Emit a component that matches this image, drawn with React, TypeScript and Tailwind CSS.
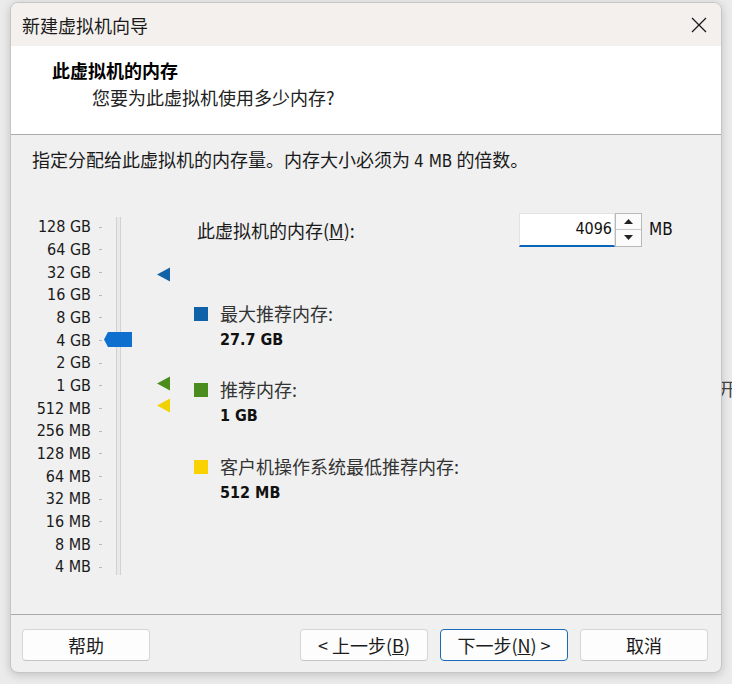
import React from "react";

const LATIN = '"DejaVu Sans Condensed", "Liberation Sans", "Noto Sans CJK SC", sans-serif';
const CJK = '"Noto Sans CJK SC", "Liberation Sans", sans-serif';

const SCALE = [
  "128 GB",
  "64 GB",
  "32 GB",
  "16 GB",
  "8 GB",
  "4 GB",
  "2 GB",
  "1 GB",
  "512 MB",
  "256 MB",
  "128 MB",
  "64 MB",
  "32 MB",
  "16 MB",
  "8 MB",
  "4 MB",
];

function Marker({ color, top }: { color: string; top: number }) {
  return (
    <svg
      className="absolute left-[125px]"
      style={{ top }}
      width="14"
      height="15"
      viewBox="0 0 14 15"
    >
      <polygon points="0,7.5 13,0.5 13,14.5" fill={color} />
    </svg>
  );
}

function MemorySlider() {
  return (
    <div className="relative mt-[4px] h-[363px] w-[140px]">
      <div className="flex flex-col">
        {SCALE.map((s) => (
          <div key={s} className="flex h-[22.67px] items-center">
            <span
              className="w-[59px] text-right text-[16px] leading-none text-[#1a1a1a]"
              style={{ fontFamily: LATIN }}
            >
              {s}
            </span>
            <span className="ml-[8px] h-px w-[3px] bg-[#b8b8b8]" />
          </div>
        ))}
      </div>
      {/* track */}
      <div className="absolute left-[84px] top-[1px] h-[358px] w-[5px] border-x border-[#d2d2d2] bg-[#e9e9e9]" />
      {/* thumb */}
      <svg className="absolute left-[72px] top-[116px]" width="28" height="15" viewBox="0 0 28 15">
        <polygon points="0,7.5 4,0 28,0 28,15 4,15" fill="#0f6fce" />
      </svg>
      <Marker color="#1262a8" top={51} />
      <Marker color="#4a8d1e" top={160} />
      <Marker color="#f2d100" top={182} />
    </div>
  );
}

function Legend({
  color,
  label,
  value,
  className = "",
}: {
  color: string;
  label: string;
  value: string;
  className?: string;
}) {
  return (
    <div className={"flex items-start " + className}>
      <span className="mt-[6px] h-[14px] w-[14px]" style={{ background: color }} />
      <div className="ml-[12px] flex flex-col">
        <span className="h-[24px] text-[18px] leading-[24px] text-[#333]" style={{ fontFamily: CJK }}>
          {label}
        </span>
        <span
          className="mt-[3px] h-[24px] text-[16px] font-bold leading-[24px] text-[#111]"
          style={{ fontFamily: LATIN }}
        >
          {value}
        </span>
      </div>
    </div>
  );
}

function Button({
  children,
  primary = false,
}: {
  children: React.ReactNode;
  primary?: boolean;
}) {
  return (
    <button
      type="button"
      className={[
        "flex h-[32px] w-[128px] items-center justify-center rounded-[4px] border bg-[#fdfdfd] text-[18px] leading-none text-[#1b1b1b]",
        primary ? "border-[#1a6bb8]" : "border-[#d6d6d6] border-b-[#c4c4c4]",
      ].join(" ")}
      style={{ fontFamily: CJK }}
    >
      {children}
    </button>
  );
}

export default function App() {
  return (
    <div className="relative h-[684px] w-[732px] overflow-hidden bg-[#ebebeb]">
      <span
        className="absolute left-[718px] top-[379px] text-[18px] leading-none text-[#444]"
        style={{ fontFamily: CJK }}
      >
        开
      </span>
      <div className="relative z-10 ml-[10px] mt-[2px] flex h-[671px] w-[712px] flex-col overflow-hidden rounded-[8px] border border-[#c6c6c6] bg-[#f0f0f0] shadow-[0_2px_10px_rgba(0,0,0,0.18)]">
        {/* title bar */}
        <div className="flex h-[43px] shrink-0 items-center justify-between bg-[#f4f0ee] pl-[11px] pr-[14px]">
          <span className="text-[18px] leading-none text-[#1a1a1a]" style={{ fontFamily: CJK }}>
            新建虚拟机向导
          </span>
          <svg width="16" height="16" viewBox="0 0 16 16">
            <path d="M1 1 L15 15 M15 1 L1 15" stroke="#1a1a1a" strokeWidth="1.3" />
          </svg>
        </div>

        {/* header */}
        <div className="flex h-[89px] shrink-0 flex-col border-b border-[#a9a9a9] bg-white pl-[41px] pt-[12px]">
          <span className="h-[24px] text-[18px] font-bold leading-[24px] text-black" style={{ fontFamily: CJK }}>
            此虚拟机的内存
          </span>
          <span
            className="ml-[40px] mt-[3px] h-[24px] text-[18px] leading-[24px] text-[#222]"
            style={{ fontFamily: CJK }}
          >
            您要为此虚拟机使用多少内存?
          </span>
        </div>

        {/* body */}
        <div className="flex flex-1 flex-col px-[21px] pt-[12px]">
          <span className="h-[24px] text-[18px] leading-[24px] text-[#1a1a1a]" style={{ fontFamily: CJK }}>
            指定分配给此虚拟机的内存量。内存大小必须为{" "}
            <span style={{ fontFamily: LATIN }} className="text-[17px]">
              4 MB
            </span>{" "}
            的倍数。
          </span>

          <div className="mt-[41px] flex items-start">
            <MemorySlider />

            <div className="ml-[22px] flex flex-1 flex-col">
              <div className="flex h-[35px] items-center">
                <span
                  className="ml-[3px] w-[322px] text-[18px] leading-none text-[#1a1a1a]"
                  style={{ fontFamily: CJK }}
                >
                  此虚拟机的内存(<span className="underline">M</span>):
                </span>
                <div className="flex h-[34px] w-[96px] items-center justify-end border border-b-2 border-[#e3e3e3] border-b-[#0a64b8] bg-white pr-[2px]">
                  <span className="text-[16px] leading-none text-[#111]" style={{ fontFamily: LATIN }}>
                    4096
                  </span>
                </div>
                <div className="flex h-[34px] w-[27px] flex-col border border-[#b9b9b9] bg-[#f3f3f3]">
                  <div className="flex flex-1 items-center justify-center border-b border-[#c9c9c9] bg-[#fbfbfb]">
                    <svg width="9" height="5" viewBox="0 0 9 5">
                      <polygon points="0,5 4.5,0 9,5" fill="#222" />
                    </svg>
                  </div>
                  <div className="flex flex-1 items-center justify-center bg-[#fbfbfb]">
                    <svg width="9" height="5" viewBox="0 0 9 5">
                      <polygon points="0,0 4.5,5 9,0" fill="#222" />
                    </svg>
                  </div>
                </div>
                <span className="ml-[7px] text-[17px] leading-none text-[#111]" style={{ fontFamily: LATIN }}>
                  MB
                </span>
              </div>

              <Legend className="mt-[54px]" color="#0f62a8" label="最大推荐内存:" value="27.7 GB" />
              <Legend className="mt-[25px]" color="#4a8d1e" label="推荐内存:" value="1 GB" />
              <Legend className="mt-[26px]" color="#f9d200" label="客户机操作系统最低推荐内存:" value="512 MB" />
            </div>
          </div>
        </div>

        {/* footer */}
        <div className="flex h-[58px] shrink-0 items-start justify-between border-t border-[#a9a9a9] px-[11px] pt-[14px]">
          <Button>帮助</Button>
          <div className="flex gap-[12px] pr-[2px]">
            <Button>
              &lt; 上一步(<span className="underline">B</span>)
            </Button>
            <Button primary>
              下一步(<span className="underline">N</span>) &gt;
            </Button>
            <Button>取消</Button>
          </div>
        </div>
      </div>
    </div>
  );
}
